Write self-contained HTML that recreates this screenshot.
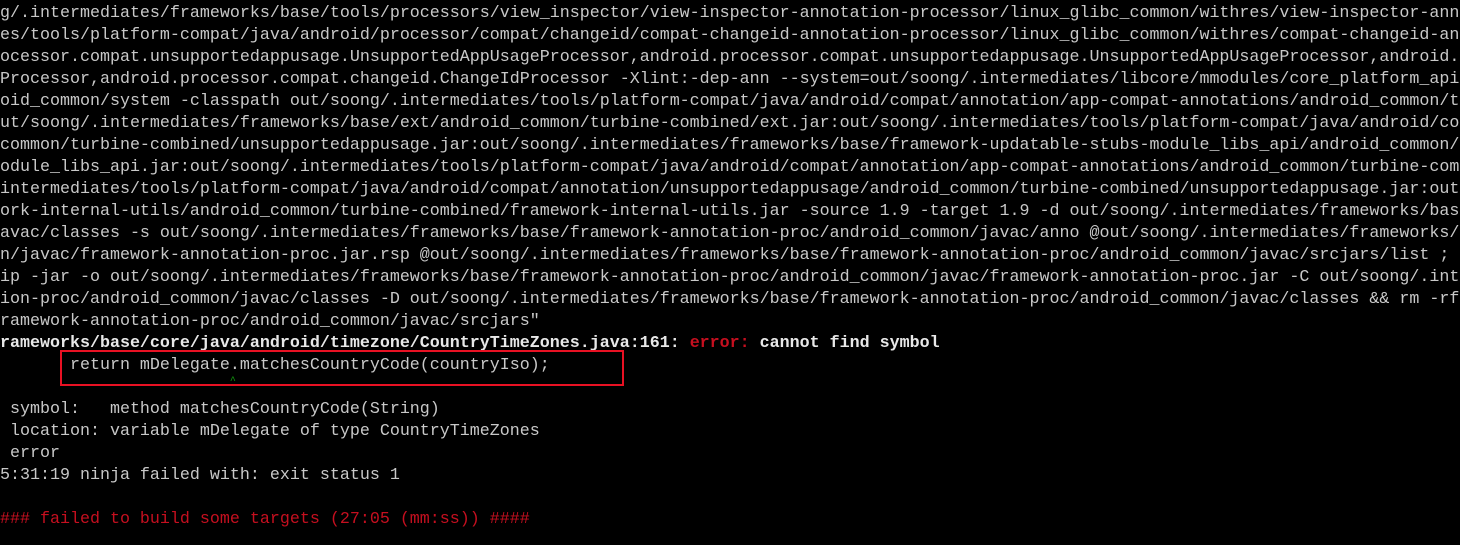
<!DOCTYPE html>
<html><head><style>
html,body{margin:0;padding:0;background:#000;width:1460px;height:545px;overflow:hidden}
pre{margin:0;position:absolute;left:0;top:3px;font-family:"Liberation Mono",monospace;font-size:16.67px;line-height:22px;color:#c8c8c8;white-space:pre}
b{color:#e8e8e8}
.r{color:#c50f1f}
.g{color:#13a10e}
#box{position:absolute;left:60px;top:350px;width:560px;height:32px;border:2px solid #e81123}
</style></head><body>
<pre>g/.intermediates/frameworks/base/tools/processors/view_inspector/view-inspector-annotation-processor/linux_glibc_common/withres/view-inspector-ann
es/tools/platform-compat/java/android/processor/compat/changeid/compat-changeid-annotation-processor/linux_glibc_common/withres/compat-changeid-an
ocessor.compat.unsupportedappusage.UnsupportedAppUsageProcessor,android.processor.compat.unsupportedappusage.UnsupportedAppUsageProcessor,android.
Processor,android.processor.compat.changeid.ChangeIdProcessor -Xlint:-dep-ann --system=out/soong/.intermediates/libcore/mmodules/core_platform_api
oid_common/system -classpath out/soong/.intermediates/tools/platform-compat/java/android/compat/annotation/app-compat-annotations/android_common/t
ut/soong/.intermediates/frameworks/base/ext/android_common/turbine-combined/ext.jar:out/soong/.intermediates/tools/platform-compat/java/android/co
common/turbine-combined/unsupportedappusage.jar:out/soong/.intermediates/frameworks/base/framework-updatable-stubs-module_libs_api/android_common/
odule_libs_api.jar:out/soong/.intermediates/tools/platform-compat/java/android/compat/annotation/app-compat-annotations/android_common/turbine-com
intermediates/tools/platform-compat/java/android/compat/annotation/unsupportedappusage/android_common/turbine-combined/unsupportedappusage.jar:out
ork-internal-utils/android_common/turbine-combined/framework-internal-utils.jar -source 1.9 -target 1.9 -d out/soong/.intermediates/frameworks/bas
avac/classes -s out/soong/.intermediates/frameworks/base/framework-annotation-proc/android_common/javac/anno @out/soong/.intermediates/frameworks/
n/javac/framework-annotation-proc.jar.rsp @out/soong/.intermediates/frameworks/base/framework-annotation-proc/android_common/javac/srcjars/list ;
ip -jar -o out/soong/.intermediates/frameworks/base/framework-annotation-proc/android_common/javac/framework-annotation-proc.jar -C out/soong/.int
ion-proc/android_common/javac/classes -D out/soong/.intermediates/frameworks/base/framework-annotation-proc/android_common/javac/classes &amp;&amp; rm -rf
ramework-annotation-proc/android_common/javac/srcjars"
<b>rameworks/base/core/java/android/timezone/CountryTimeZones.java:161: <span class="r">error:</span> cannot find symbol</b>
       return mDelegate.matchesCountryCode(countryIso);
                       <span class="g" style="font-size:10px;vertical-align:top;line-height:10px">^</span>
 symbol:   method matchesCountryCode(String)
 location: variable mDelegate of type CountryTimeZones
 error
5:31:19 ninja failed with: exit status 1

<span class="r">### failed to build some targets (27:05 (mm:ss)) ####</span></pre>
<div id="box"></div>
</body></html>
